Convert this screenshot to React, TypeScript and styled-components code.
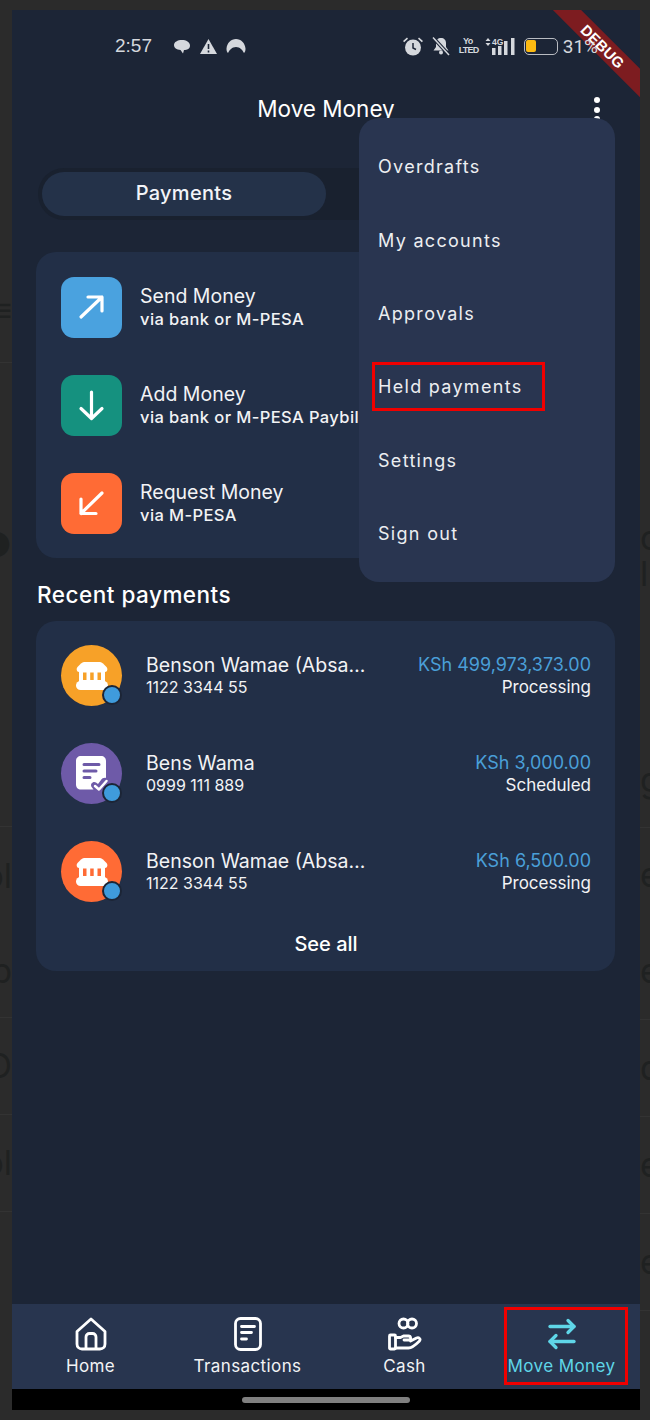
import React from 'react';
import styled, { createGlobalStyle } from 'styled-components';
import { ArrowRightLeft } from 'lucide-react';

const GlobalStyle = createGlobalStyle`
  html, body { margin: 0; padding: 0; background: #2b2b2b; }
  * { box-sizing: border-box; }
  body { font-family: Inter, "Liberation Sans", sans-serif; color: #fff; }
`;

const Page = styled.div`
  width: 650px;
  height: 1420px;
  display: grid;
  grid-template-columns: 12px 628px 10px;
  padding: 10px 0;
  overflow: hidden;
`;

const Gutter = styled.div<{ $side: 'left' | 'right' }>`
  height: 100%;
  overflow: hidden;
  display: flex;
  flex-direction: column;
  align-items: ${({ $side }) => ($side === 'left' ? 'flex-end' : 'flex-start')};
  justify-content: flex-start;
  color: #1f2121;
  font-size: 34px;
  line-height: 1;
`;

const GhostRow = styled.div<{ $h: number; $line?: boolean; $side: 'left' | 'right' }>`
  height: ${({ $h }) => $h}px;
  width: 100%;
  flex: none;
  display: flex;
  align-items: center;
  justify-content: ${({ $side }) => ($side === 'left' ? 'flex-end' : 'flex-start')};
  border-bottom: ${({ $line }) => ($line ? '1px solid #333' : 'none')};
  white-space: nowrap;
`;

const Phone = styled.div`
  position: relative;
  height: 1400px;
  background: #1c2536;
  display: flex;
  flex-direction: column;
  overflow: hidden;
`;

const StatusBar = styled.div`
  height: 72px;
  flex: none;
  padding: 0 42px 0 103px;
  display: flex;
  align-items: center;
  color: #d5d8dd;
`;

const Time = styled.span`
  font-family: "Liberation Sans", sans-serif;
  font-size: 19px;
  width: 57px;
  margin-right: 1px;
`;

const StatusGroup = styled.div<{ $gap: number }>`
  display: flex;
  align-items: center;
  gap: ${({ $gap }) => $gap}px;
`;

const Spacer = styled.div`
  flex: 1;
`;

const VoLte = styled.span`
  font-family: "Liberation Sans", sans-serif;
  font-size: 9px;
  font-weight: 700;
  line-height: 9px;
  letter-spacing: -0.8px;
  text-align: center;
  width: 18px;
`;

const Percent = styled.span`
  position: relative;
  z-index: 2;
  font-family: Roboto, sans-serif;
  font-size: 19px;
  margin-left: 5px;
`;

const Battery = styled.div`
  width: 34px;
  height: 17px;
  border: 1.5px solid #b9bcc2;
  border-radius: 5px;
  padding: 1.5px;
  display: flex;
`;

const BatteryLevel = styled.div`
  width: 10px;
  background: #fdbb12;
  border-radius: 2px;
`;

const AppBar = styled.div`
  height: 52px;
  flex: none;
  position: relative;
  display: flex;
  align-items: center;
  justify-content: center;
  font-size: 22.5px;
`;

const MoreDots = styled.div`
  position: absolute;
  right: 40px;
  top: 15px;
  display: flex;
  flex-direction: column;
  gap: 3.5px;
`;

const Dot = styled.span`
  width: 6px;
  height: 6px;
  border-radius: 50%;
  background: #fff;
`;

const Tabs = styled.div`
  margin: 34px 0 0 26px;
  width: 577px;
  height: 52px;
  flex: none;
  padding: 4px;
  border-radius: 26px;
  background: #19212f;
`;

const ActiveTab = styled.div`
  width: 284px;
  height: 44px;
  border-radius: 22px;
  background: #243249;
  display: flex;
  align-items: center;
  justify-content: center;
  font-size: 20px;
  font-weight: 500;
  letter-spacing: 0.3px;
  color: #f2f4f8;
  padding-bottom: 2px;
`;

const Card = styled.div`
  margin: 0 25px 0 24px;
  background: #222f47;
  border-radius: 20px;
  padding: 25px 24px 0 25px;
  flex: none;
`;

const ActionCard = styled(Card)`
  margin-top: 32px;
  height: 306px;
`;

const ActionRow = styled.div`
  height: 61px;
  display: flex;
  align-items: center;
  gap: 18px;
  margin-bottom: 37px;
`;

const IconTile = styled.div<{ $bg: string }>`
  width: 61px;
  height: 61px;
  flex: none;
  border-radius: 13px;
  background: ${({ $bg }) => $bg};
`;

const RowText = styled.div<{ $gap?: number; $lift?: number }>`
  display: flex;
  flex-direction: column;
  gap: ${({ $gap = 1 }) => $gap}px;
  padding-bottom: ${({ $lift = 0 }) => $lift}px;
  min-width: 0;
  white-space: nowrap;
`;

const ActionTitle = styled.span`
  font-size: 19.5px;
  line-height: 24px;
  color: #f2f3f5;
`;

const ActionSub = styled.span`
  font-size: 16.5px;
  font-weight: 500;
  letter-spacing: 0.4px;
  line-height: 19px;
  color: #f2f3f5;
`;

const SectionTitle = styled.h2`
  margin: 22px 0 11px 25px;
  height: 30px;
  font-size: 22.5px;
  letter-spacing: 0.5px;
  line-height: 30px;
  font-weight: 500;
  flex: none;
`;

const PaymentCard = styled(Card)`
  height: 350px;
  padding-top: 24px;
`;

const PaymentRow = styled.div`
  height: 61px;
  display: flex;
  align-items: center;
  margin-bottom: 37px;
`;

const Avatar = styled.div<{ $bg: string }>`
  position: relative;
  width: 61px;
  height: 61px;
  flex: none;
  border-radius: 50%;
  background: ${({ $bg }) => $bg};
  display: flex;
  align-items: center;
  justify-content: center;
  margin-right: 24px;
`;

const StatusDot = styled.span`
  position: absolute;
  right: 0;
  bottom: 1px;
  width: 20px;
  height: 20px;
  border-radius: 50%;
  background: #3f9bdc;
  border: 2.5px solid #1c2536;
`;

const PaymentName = styled.span`
  width: 222px;
  font-size: 19.5px;
  line-height: 24px;
  color: #f2f3f5;
  overflow: hidden;
  text-overflow: ellipsis;
`;

const PaymentNumber = styled.span`
  font-size: 16px;
  line-height: 19px;
  color: #f2f3f5;
`;

const PaymentStatus = styled.span`
  font-size: 17px;
  line-height: 19px;
  color: #f2f3f5;
`;

const PaymentRight = styled.div`
  margin-left: auto;
  padding-bottom: 2px;
  display: flex;
  flex-direction: column;
  align-items: flex-end;
  gap: 1px;
  white-space: nowrap;
`;

const Amount = styled.span`
  font-size: 18px;
  line-height: 24px;
  color: #4a9fd8;
`;

const SeeAll = styled.div`
  margin-top: -7px;
  text-align: center;
  font-size: 20px;
  line-height: 24px;
  font-weight: 500;
`;

const BottomNav = styled.nav`
  margin-top: auto;
  height: 85px;
  flex: none;
  background: #28354f;
  display: grid;
  grid-template-columns: repeat(4, 1fr);
`;

const NavItem = styled.div<{ $active?: boolean }>`
  position: relative;
  display: flex;
  flex-direction: column;
  align-items: center;
  padding-top: 13px;
  gap: 5px;
  font-size: 17px;
  letter-spacing: 0.4px;
  line-height: 20px;
  color: ${({ $active }) => ($active ? '#5fd6e8' : '#f2f3f5')};
`;

const NavIcon = styled.div`
  height: 34px;
  display: flex;
  align-items: center;
  justify-content: center;
`;

const RedBox = styled.span`
  position: absolute;
  border: 3px solid #f00000;
  pointer-events: none;
`;

const NavMark = styled(RedBox)`
  top: 3px;
  left: 21px;
  width: 124px;
  height: 78px;
`;

const HomeBar = styled.div`
  height: 21px;
  flex: none;
  background: #000;
  display: flex;
  justify-content: center;
  padding-top: 8px;
`;

const HomeIndicator = styled.div`
  width: 168px;
  height: 6px;
  border-radius: 3px;
  background: #808080;
`;

const Menu = styled.div`
  position: absolute;
  left: 347px;
  top: 108px;
  width: 256px;
  height: 464px;
  border-radius: 20px;
  background: #293550;
  padding: 12px 0 0 19px;
  display: flex;
  flex-direction: column;
`;

const MenuItem = styled.div`
  position: relative;
  height: 73.4px;
  display: flex;
  align-items: center;
  font-size: 18px;
  letter-spacing: 1.3px;
  color: #eceef1;
`;

const MenuMark = styled(RedBox)`
  left: -6px;
  top: 12px;
  width: 173px;
  height: 49px;
`;

const Ribbon = styled.div`
  position: absolute;
  top: 26px;
  left: 521px;
  width: 140px;
  height: 20px;
  transform: rotate(45deg);
  background: #7d1c20;
  display: flex;
  align-items: center;
  justify-content: center;
  font-family: "Liberation Sans", sans-serif;
  font-size: 15px;
  font-weight: 700;
  color: #fff;
`;

const ArrowGlyph = ({ d }: { d: string }) => (
  <svg width="61" height="61" viewBox="0 0 61 61" fill="none" stroke="#fff" strokeWidth="3.2" strokeLinecap="round" strokeLinejoin="round">
    <path d={d} />
  </svg>
);

const BankIcon = ({ bg }: { bg: string }) => (
  <svg width="32" height="28" viewBox="0 0 32 28" fill="#fff">
    <path d="M8 0h16c1 0 2 .5 3 1.500l3.500 3.500c1.500 1.500 1 5-1.500 5H3C.5 10 0 6.500 1.500 5L5 1.500C6 .5 7 0 8 0Z" />
    <rect x="3" y="9" width="26" height="11" />
    <rect x="7" y="10.500" width="3.500" height="7.500" fill={bg} />
    <rect x="14.200" y="10.500" width="3.500" height="7.500" fill={bg} />
    <rect x="21.500" y="10.500" width="3.500" height="7.500" fill={bg} />
    <rect x="0" y="19" width="32" height="9" rx="4.500" />
  </svg>
);

const ApprovalIcon = () => (
  <svg width="34" height="38" viewBox="0 0 34 38" fill="none">
    <path
      d="M6 1h20c3 0 5 2 5 5v17c-2-.5-4 .5-5 2l-3 4-2-1.500c-1.500-1-3.500-.5-4.500 1-.8 1.400-.5 3 .5 4l1.500 2H6c-3 0-5-2-5-5V6c0-3 2-5 5-5Z"
      fill="#fff"
    />
    <path d="M9 9.500h15M9 16h12M9 22.500h6" stroke="#6e5aa8" strokeWidth="3" strokeLinecap="round" />
    <path d="m20 31 4 3.500L31.500 26" stroke="#fff" strokeWidth="2.500" strokeLinecap="round" strokeLinejoin="round" />
  </svg>
);

const HomeIcon = () => (
  <svg width="32" height="34" viewBox="0 0 32 34" fill="none" stroke="#fff" strokeWidth="2.800" strokeLinejoin="round">
    <path d="M2 14.500 16 2l14 12.500V27c0 3-2 5-5 5H7c-3 0-5-2-5-5V14.500Z" />
    <path d="M11 32V20c0-2 1.500-3.500 3.500-3.500h3c2 0 3.500 1.500 3.500 3.500v12" />
  </svg>
);

const TransactionsIcon = () => (
  <svg width="28" height="34" viewBox="0 0 28 34" fill="none" stroke="#fff" strokeWidth="2.800" strokeLinecap="round">
    <rect x="1.500" y="1.500" width="25" height="31" rx="5" />
    <path d="M7.500 9.500h13M7.500 15.500h10M7.500 22h5" />
  </svg>
);

const CashIcon = () => (
  <svg width="34" height="34" viewBox="0 0 34 34" fill="none" stroke="#fff" strokeWidth="2.800" strokeLinecap="round" strokeLinejoin="round">
    <circle cx="15.500" cy="6.500" r="4.500" />
    <circle cx="24" cy="6.500" r="4.500" />
    <rect x="1.500" y="18" width="6" height="14" rx="1" />
    <path d="M7.500 20.500h5l3-1.500h5c2.500 0 3 3.500.5 4h-5" />
    <path d="M7.500 31h13c3 0 8-4 11-7 1.500-2-.5-4-3-3l-6 3" />
  </svg>
);

const AlarmIcon = () => (
  <svg width="22" height="20" viewBox="0 0 22 20" fill="#d5d8dd">
    <circle cx="11" cy="11.500" r="8" />
    <path d="M1 5 5 1.500 6 2.800 2.200 6.200ZM21 5l-4-3.500-1 1.300 3.800 3.400Z" />
    <path d="M11 7v5l3 1.500" stroke="#1c2536" strokeWidth="1.500" fill="none" />
  </svg>
);

const MutedBell = () => (
  <svg width="20" height="20" viewBox="0 0 20 20" fill="#d5d8dd">
    <path d="M10 2c3 0 5 2 5 5v4l2.500 3.500h-15L5 11V7c0-3 2-5 5-5Z" />
    <circle cx="10" cy="16.500" r="2" />
    <path d="M2 1.500 18 19" stroke="#1c2536" strokeWidth="3.500" />
    <path d="M2 1.500 18 19" stroke="#d5d8dd" strokeWidth="1.500" />
  </svg>
);

const SignalIcon = () => (
  <svg width="32" height="18" viewBox="0 0 32 18" fill="#d5d8dd">
    <path d="M4 1 6.500 4h-5ZM4 9 1.500 6h5Z" />
    <text x="8" y="7.500" fontFamily="Liberation Sans" fontSize="8.500" fontWeight="700">4G</text>
    <rect x="8" y="11" width="3.500" height="7" />
    <rect x="14" y="9" width="3.500" height="9" />
    <rect x="20" y="4" width="3.500" height="14" />
    <rect x="27" y="1" width="3.500" height="17" />
  </svg>
);

const ACTIONS = [
  { title: 'Send Money', sub: 'via bank or M-PESA', bg: '#4aa2df', arrow: 'M20 40 41 20M27 20h14v14' },
  { title: 'Add Money', sub: 'via bank or M-PESA Paybill', bg: '#15917f', arrow: 'M30.500 17v26M20 33.500l10.500 10 10.500-10' },
  { title: 'Request Money', sub: 'via M-PESA', bg: '#ff6b35', arrow: 'M41 20 20 40.500M20 26v14.500h15' },
];

const PAYMENTS = [
  { name: 'Benson Wamae (Absa Bank)', number: '1122 3344 55', amount: 'KSh 499,973,373.00', status: 'Processing', bg: '#f7a128', icon: <BankIcon bg="#f7a128" /> },
  { name: 'Bens Wama', number: '0999 111 889', amount: 'KSh 3,000.00', status: 'Scheduled', bg: '#6e5aa8', icon: <ApprovalIcon /> },
  { name: 'Benson Wamae (Absa Bank)', number: '1122 3344 55', amount: 'KSh 6,500.00', status: 'Processing', bg: '#ff6b35', icon: <BankIcon bg="#ff6b35" /> },
];

const MENU = ['Overdrafts', 'My accounts', 'Approvals', 'Held payments', 'Settings', 'Sign out'];

export default function App() {
  return (
    <Page>
      <GlobalStyle />
      <Gutter $side="left">
        <GhostRow $side="left" $h={280} />
        <GhostRow $side="left" $h={40}>≡</GhostRow>
        <GhostRow $side="left" $h={33} $line />
        <GhostRow $side="left" $h={165} />
        <GhostRow $side="left" $h={34}>●</GhostRow>
        <GhostRow $side="left" $h={265} $line />
        <GhostRow $side="left" $h={97}>ol</GhostRow>
        <GhostRow $side="left" $h={94} $line>ob</GhostRow>
        <GhostRow $side="left" $h={97} $line>O</GhostRow>
        <GhostRow $side="left" $h={97} $line>ol</GhostRow>
      </Gutter>
      <Phone>
        <StatusBar>
          <Time>2:57</Time>
          <StatusGroup $gap={9}>
            <svg width="18" height="16" viewBox="0 0 18 16" fill="#d5d8dd">
              <path d="M9 2c4 0 8 2 8 5.500S14 12 11 12l-1 3.500L7.500 12C3.500 11.500 1 10 1 7 1 4 4.500 2 9 2Z" />
            </svg>
            <svg width="17" height="15" viewBox="0 0 17 15">
              <path d="M8.500 0 17 15H0Z" fill="#d5d8dd" />
              <path d="M8.500 5v5M8.500 11.500v2" stroke="#1c2536" strokeWidth="1.600" />
            </svg>
            <svg width="20" height="16" viewBox="0 0 20 16" fill="#d5d8dd">
              <path d="M10 1c5 0 9 4 9.500 9.500.1 2-.5 3.500-1.500 4.500-1.500-3-4-6-8-6s-6.500 3-8 6c-1-1-1.600-2.500-1.500-4.500C1 5 5 1 10 1Z" />
            </svg>
          </StatusGroup>
          <Spacer />
          <StatusGroup $gap={7.5}>
            <AlarmIcon />
            <MutedBell />
            <VoLte>Yo<br />LTED</VoLte>
            <SignalIcon />
            <Battery><BatteryLevel /></Battery>
          </StatusGroup>
          <Percent>31%</Percent>
        </StatusBar>
        <AppBar>
          Move Money
          <MoreDots><Dot /><Dot /><Dot /></MoreDots>
        </AppBar>
        <Tabs>
          <ActiveTab>Payments</ActiveTab>
        </Tabs>
        <ActionCard>
          {ACTIONS.map(({ title, sub, bg, arrow }) => (
            <ActionRow key={title}>
              <IconTile $bg={bg}><ArrowGlyph d={arrow} /></IconTile>
              <RowText $gap={2} $lift={2}>
                <ActionTitle>{title}</ActionTitle>
                <ActionSub>{sub}</ActionSub>
              </RowText>
            </ActionRow>
          ))}
        </ActionCard>
        <SectionTitle>Recent payments</SectionTitle>
        <PaymentCard>
          {PAYMENTS.map(p => (
            <PaymentRow key={p.number + p.amount}>
              <Avatar $bg={p.bg}>
                {p.icon}
                <StatusDot />
              </Avatar>
              <RowText $lift={2}>
                <PaymentName>{p.name}</PaymentName>
                <PaymentNumber>{p.number}</PaymentNumber>
              </RowText>
              <PaymentRight>
                <Amount>{p.amount}</Amount>
                <PaymentStatus>{p.status}</PaymentStatus>
              </PaymentRight>
            </PaymentRow>
          ))}
          <SeeAll>See all</SeeAll>
        </PaymentCard>
        <BottomNav>
          <NavItem>
            <NavIcon><HomeIcon /></NavIcon>
            Home
          </NavItem>
          <NavItem>
            <NavIcon><TransactionsIcon /></NavIcon>
            Transactions
          </NavItem>
          <NavItem>
            <NavIcon><CashIcon /></NavIcon>
            Cash
          </NavItem>
          <NavItem $active>
            <NavIcon><ArrowRightLeft size={36} color="#5fd6e8" strokeWidth={2.2} /></NavIcon>
            Move Money
            <NavMark />
          </NavItem>
        </BottomNav>
        <HomeBar><HomeIndicator /></HomeBar>
        <Menu>
          {MENU.map(item => (
            <MenuItem key={item}>
              {item}
              {item === 'Held payments' && <MenuMark />}
            </MenuItem>
          ))}
        </Menu>
        <Ribbon>DEBUG</Ribbon>
      </Phone>
      <Gutter $side="right">
        <GhostRow $side="right" $h={510} />
        <GhostRow $side="right" $h={36}>c</GhostRow>
        <GhostRow $side="right" $h={36}>l</GhostRow>
        <GhostRow $side="right" $h={140} />
        <GhostRow $side="right" $h={96} $line>g</GhostRow>
        <GhostRow $side="right" $h={94}>e</GhostRow>
        <GhostRow $side="right" $h={98} $line>e</GhostRow>
        <GhostRow $side="right" $h={97} $line>d</GhostRow>
        <GhostRow $side="right" $h={97} $line>e</GhostRow>
        <GhostRow $side="right" $h={97} $line>e</GhostRow>
      </Gutter>
    </Page>
  );
}
